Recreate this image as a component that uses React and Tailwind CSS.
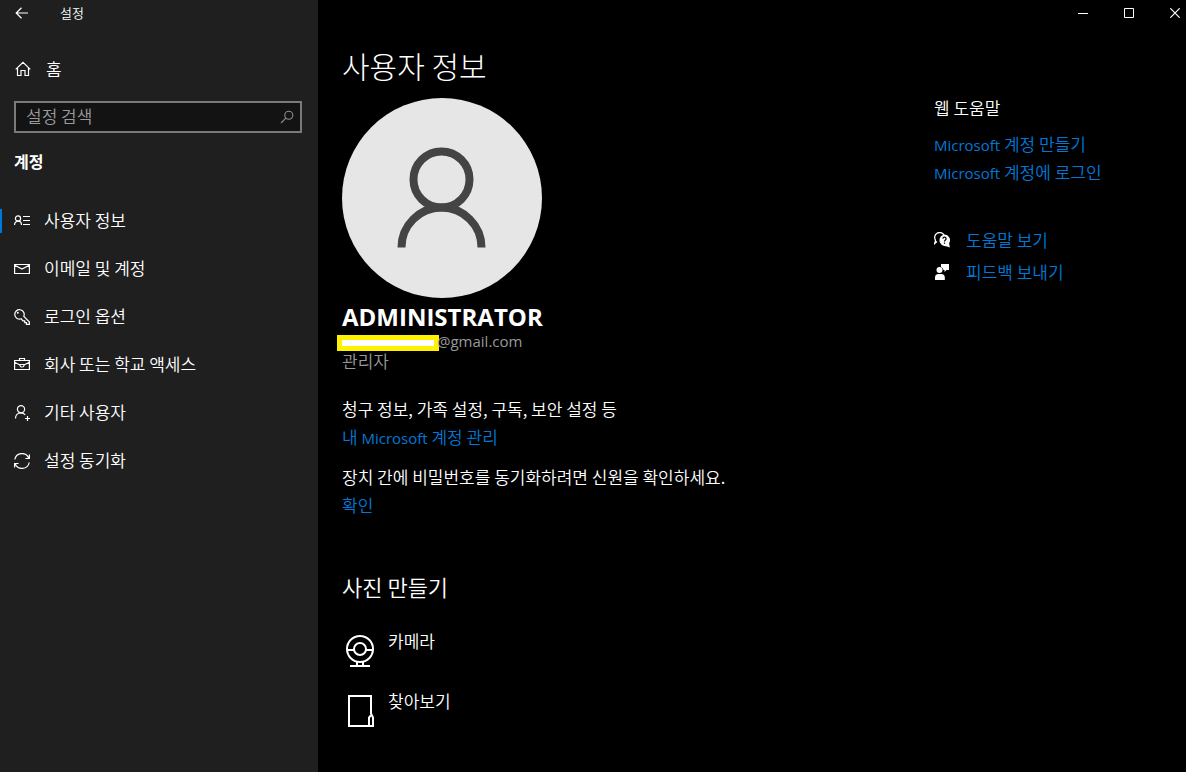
import { useState } from "react";

const stroke = {
  fill: "none",
  stroke: "currentColor",
  strokeWidth: 1,
  "aria-hidden": true,
};

function BackIcon() {
  return (
    <svg width="14" height="12" viewBox="0 0 14 12" {...stroke} strokeWidth="1.2">
      <path d="M6.5 .8 1.2 6l5.3 5.2M1.2 6H13" />
    </svg>
  );
}

function HomeIcon() {
  return (
    <svg width="16" height="16" viewBox="0 0 16 16" {...stroke} strokeWidth="1.2">
      <path d="M.7 8.4 8 1.4l7.3 7M2.5 6.8v7.7H6v-5h4v5h3.5V6.8" />
    </svg>
  );
}

function SearchIcon() {
  return (
    <svg width="14" height="14" viewBox="0 0 14 14" {...stroke} strokeWidth="1.1">
      <circle cx="8.8" cy="5.2" r="4" />
      <path d="M5.9 8.1 1 13" />
    </svg>
  );
}

function UserInfoIcon() {
  return (
    <svg width="16" height="16" viewBox="0 0 16 16" {...stroke} strokeWidth="1.2">
      <circle cx="4" cy="5.5" r="2.6" />
      <path d="M.6 12v-.4a3.4 3.4 0 0 1 6.8 0v.4M9 3.5h7M9 7.5h7M9 11.5h7" />
    </svg>
  );
}

function MailIcon() {
  return (
    <svg width="16" height="16" viewBox="0 0 16 16" {...stroke} strokeWidth="1.2">
      <path d="M.6 3.5h14.8v9H.6zM.8 4.2 8 8l7.2-3.8" />
    </svg>
  );
}

function KeyIcon() {
  return (
    <svg width="16" height="16" viewBox="0 0 16 16" {...stroke} strokeWidth="1.2">
      <path d="M9.8 7.3 15.4 13v2.4h-2.9v-1.7h-1.8v-1.9H9l-1.8-2A4.7 4.7 0 1 1 9.8 7.3z" />
      <circle cx="3.8" cy="3.8" r="1" fill="currentColor" stroke="none" />
    </svg>
  );
}

function BriefcaseIcon() {
  return (
    <svg width="16" height="16" viewBox="0 0 16 16" {...stroke} strokeWidth="1.2">
      <path d="M.6 3.5h14.8v9H.6zM5.5 3.5v-2h5v2M.6 5.3 6 8M15.4 5.3 10 8M6 7.5h4v1a2 1.5 0 0 1-4 0z" />
    </svg>
  );
}

function OtherUsersIcon() {
  return (
    <svg width="16" height="16" viewBox="0 0 16 16" {...stroke} strokeWidth="1.2">
      <circle cx="7" cy="4.2" r="3.6" />
      <path d="M1.5 13.5c0-3.2 2.2-5.6 5.5-5.6 1.9 0 3.3.8 4.2 2.1M13.5 11v5M11 13.5h5" />
    </svg>
  );
}

function SyncIcon() {
  return (
    <svg width="16" height="16" viewBox="0 0 16 16" {...stroke} strokeWidth="1.2">
      <path d="M.8 6.5A7.3 7.3 0 0 1 14.8 5.3M15.4 1.5v4h-4M15.2 9.5A7.3 7.3 0 0 1 1.2 10.7M.6 14.5v-4h4" />
    </svg>
  );
}

function CameraIcon() {
  return (
    <svg width="32" height="34" viewBox="0 0 32 34" {...stroke} strokeWidth="2">
      <circle cx="16" cy="14" r="13" />
      <circle cx="16" cy="14" r="6" />
      <path d="M3 15h7M22 15h7M13 26.5V31M19 26.5V31M6 31h20" />
    </svg>
  );
}

function BrowseIcon() {
  return (
    <svg width="32" height="34" viewBox="0 0 32 34" {...stroke} strokeWidth="2">
      <path d="M27 19V1H5v30h24v-8.5l-1.5-3-2.5 3V31" />
    </svg>
  );
}

function HelpIcon() {
  return (
    <svg width="16" height="16" viewBox="0 0 16 16" aria-hidden="true">
      <path
        d="M3 9.5.7 11.5l.8-3.2A5 5 0 1 1 10 2.8"
        fill="none"
        stroke="currentColor"
        strokeWidth="1.3"
      />
      <path
        d="M10.5 2.5a5.5 5.5 0 0 1 4.6 8.5l.7 4.5-3.5-1.3A5.5 5.5 0 1 1 10.5 2.5z"
        fill="currentColor"
      />
      <path
        d="M8.9 6.7c0-2 3.2-2 3.2 0 0 1.3-1.6 1.2-1.6 2.7M10.5 10.5v1.3"
        fill="none"
        stroke="black"
        strokeWidth="1.2"
      />
    </svg>
  );
}

function FeedbackIcon() {
  return (
    <svg width="16" height="16" viewBox="0 0 16 16" fill="currentColor" aria-hidden="true">
      <path d="M7 0h8v6h-2.5l-2 2V6h-1A4 4 0 0 0 7 3z" />
      <circle cx="5.5" cy="6" r="3" />
      <path d="M1 16v-2.5A3.5 3.5 0 0 1 4.5 10h2.8a3.5 3.5 0 0 1 3.5 3.5V16z" />
    </svg>
  );
}

function Avatar() {
  return (
    <svg
      className="mt-[13px] size-[200px] rounded-full bg-[#e6e6e6] text-[#444444]"
      viewBox="0 0 200 200"
      fill="none"
      stroke="currentColor"
      strokeWidth="8"
      role="img"
      aria-label="ADMINISTRATOR"
    >
      <circle cx="99.5" cy="81.5" r="28" />
      <path d="M59.5 149.5a40 40 0 0 1 80 0" />
    </svg>
  );
}

const NAV = [
  { id: "info", label: "사용자 정보", Icon: UserInfoIcon },
  { id: "email", label: "이메일 및 계정", Icon: MailIcon },
  { id: "signin", label: "로그인 옵션", Icon: KeyIcon },
  { id: "work", label: "회사 또는 학교 액세스", Icon: BriefcaseIcon },
  { id: "others", label: "기타 사용자", Icon: OtherUsersIcon },
  { id: "sync", label: "설정 동기화", Icon: SyncIcon },
];

const PICTURE_ACTIONS = [
  { label: "카메라", Icon: CameraIcon },
  { label: "찾아보기", Icon: BrowseIcon },
];

function Link({ children }) {
  return (
    <a href="#" className="text-[#0078d7] hover:text-[#8a8a8a]">
      {children}
    </a>
  );
}

// Latin words run smaller than the Hangul around them
function Latin({ children }) {
  return (
    <span className="font-['Open_Sans'] text-[15px] leading-none font-normal">{children}</span>
  );
}

function Sidebar() {
  const [active, setActive] = useState("info");
  const [query, setQuery] = useState("");

  return (
    <aside className="w-[318px] shrink-0 bg-[#1f1f1f]">
      <div className="flex h-[26px] items-center text-[13px]">
        <button aria-label="뒤로" className="flex h-full w-11 items-center justify-center">
          <BackIcon />
        </button>
        <span className="ml-4">설정</span>
      </div>

      <button className="mt-[19px] flex h-12 w-full items-center gap-[15px] pl-[15px]">
        <HomeIcon />
        <span>홈</span>
      </button>

      <label className="mt-2 mr-4 ml-[14px] flex h-8 items-center border-2 border-[#7a7a7a] bg-[#131313] pr-[6px] pl-[10px] text-[#8f8f8f]">
        <input
          type="text"
          value={query}
          onChange={(e) => setQuery(e.target.value)}
          placeholder="설정 검색"
          aria-label="설정 검색"
          className="h-7 min-w-0 flex-1 bg-transparent pb-1 text-white outline-none placeholder:text-[#9a9a9a]"
        />
        <SearchIcon />
      </label>

      <h2 className="mt-4 pl-[14px] text-base leading-6 font-bold">계정</h2>

      <nav className="mt-6">
        {NAV.map(({ id, label, Icon }) => (
          <button
            key={id}
            onClick={() => setActive(id)}
            className="flex h-12 w-full items-center text-left hover:bg-white/5"
          >
            <span className={`h-6 w-[2px] ${active === id ? "bg-[#0078d7]" : ""}`} />
            <span className="mr-[14px] ml-3">
              <Icon />
            </span>
            <span className="pb-[2px]">{label}</span>
          </button>
        ))}
      </nav>
    </aside>
  );
}

function WindowControls() {
  return (
    <div className="flex h-[26px] justify-end">
      <button aria-label="최소화" className="flex w-[46px] items-center justify-center">
        <svg width="10" height="10" viewBox="0 0 10 10" {...stroke}>
          <path d="M0 5.5h10" />
        </svg>
      </button>
      <button aria-label="최대화" className="flex w-[46px] items-center justify-center">
        <svg width="10" height="10" viewBox="0 0 10 10" {...stroke}>
          <path d="M.5.5h9v9h-9z" />
        </svg>
      </button>
      <button aria-label="닫기" className="flex w-[34px] items-center pl-[18px]">
        <svg width="10" height="10" viewBox="0 0 10 10" {...stroke} strokeWidth="1.2">
          <path d="m.3.3 9.4 9.4M9.7.3.3 9.7" />
        </svg>
      </button>
    </div>
  );
}

function UserInfo() {
  return (
    <section className="min-w-0 flex-1">
      <h1 className="text-[30px] leading-10 font-light">사용자 정보</h1>
      <Avatar />

      <p className="mt-[5px] font-['Open_Sans'] text-2xl leading-7 font-bold">ADMINISTRATOR</p>
      <div className="leading-5 text-[#999999]">
        <p className="flex items-end">
          {/* hidden part of the address */}
          <span className="-ml-[5px] h-4 w-[102px] border-5 border-[#fff200] bg-white" />
          <span className="-ml-[2px] font-['Open_Sans'] text-[15px] leading-5 font-normal">
            @gmail.com
          </span>
        </p>
        <p>관리자</p>
      </div>

      <div className="mt-6 leading-7">
        <p>청구 정보, 가족 설정, 구독, 보안 설정 등</p>
        <p>
          <Link>
            내 <Latin>Microsoft</Latin> 계정 관리
          </Link>
        </p>
      </div>
      <div className="mt-3 leading-7">
        <p>장치 간에 비밀번호를 동기화하려면 신원을 확인하세요.</p>
        <p>
          <Link>확인</Link>
        </p>
      </div>

      <h2 className="mt-[51px] text-[22px] leading-8">사진 만들기</h2>
      <div className="mt-[25px]">
        {PICTURE_ACTIONS.map(({ label, Icon }) => (
          <button key={label} className="flex h-[60px] items-start gap-3 pl-[2px] text-left">
            <span className="pt-2">
              <Icon />
            </span>
            <span className="leading-7">{label}</span>
          </button>
        ))}
      </div>
    </section>
  );
}

function HelpPanel() {
  return (
    <aside className="w-[252px] shrink-0 pt-[49px] leading-7">
      <h2>웹 도움말</h2>
      <ul className="mt-2">
        <li>
          <Link>
            <Latin>Microsoft</Latin> 계정 만들기
          </Link>
        </li>
        <li>
          <Link>
            <Latin>Microsoft</Latin> 계정에 로그인
          </Link>
        </li>
      </ul>
      <ul className="mt-[38px]">
        <li className="flex h-8 items-center gap-4">
          <HelpIcon />
          <Link>도움말 보기</Link>
        </li>
        <li className="flex h-8 items-center gap-4">
          <FeedbackIcon />
          <Link>피드백 보내기</Link>
        </li>
      </ul>
    </aside>
  );
}

export default function App() {
  return (
    <div className="flex min-h-screen bg-black font-['Noto_Sans_CJK_KR',sans-serif] text-[17px] font-[350] text-white">
      <Sidebar />
      <main className="min-w-0 flex-1">
        <WindowControls />
        <div className="mt-[19px] flex pl-6">
          <UserInfo />
          <HelpPanel />
        </div>
      </main>
    </div>
  );
}
